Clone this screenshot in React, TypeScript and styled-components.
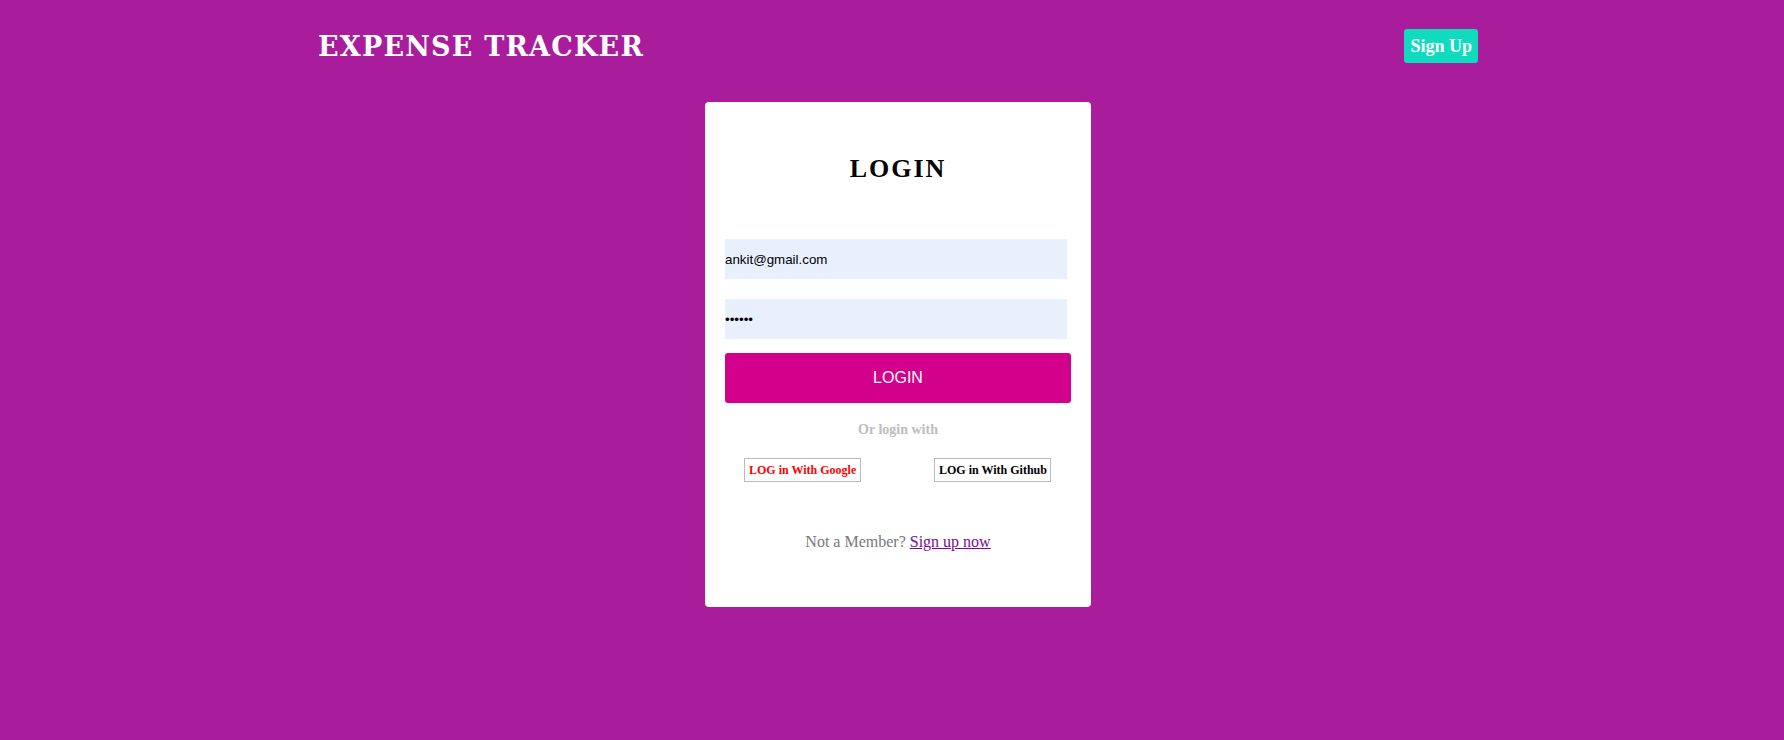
import React from 'react';
import styled, { createGlobalStyle } from 'styled-components';

const GlobalStyle = createGlobalStyle`
  html, body {
    margin: 0;
    padding: 0;
    background: #a91c9c;
  }
  * {
    box-sizing: border-box;
  }
`;

function App() {
  return (
    <Page>
      <GlobalStyle />
      <Header>
        <Brand>EXPENSE TRACKER</Brand>
        <SignUpButton>Sign Up</SignUpButton>
      </Header>
      <Main>
        <Card>
          <Title>LOGIN</Title>
          <Form onSubmit={(e) => e.preventDefault()}>
            <Field type="email" defaultValue="ankit@gmail.com" />
            <Field type="password" defaultValue="123456" />
            <SubmitButton type="submit">LOGIN</SubmitButton>
          </Form>
          <OrText>Or login with</OrText>
          <SocialRow>
            <SocialButton $color="#ff0000">LOG in With Google</SocialButton>
            <SocialButton $color="#000000">LOG in With Github</SocialButton>
          </SocialRow>
          <Footer>
            Not a Member? <SignUpLink href="#">Sign up now</SignUpLink>
          </Footer>
        </Card>
      </Main>
    </Page>
  );
}

export default App;

const Page = styled.div`
  min-height: 100vh;
  background: #a91c9c;
  font-family: 'Liberation Serif', 'Times New Roman', serif;
`;

const Header = styled.header`
  display: flex;
  align-items: center;
  justify-content: space-between;
  padding: 28px 306px 0 318px;
`;

const Brand = styled.h1`
  margin: 2px 0 0;
  color: #ffffff;
  font-family: 'DejaVu Serif', Georgia, serif;
  font-size: 27px;
  font-weight: 700;
  letter-spacing: 1.2px;
  line-height: 34px;
`;

const SignUpButton = styled.button`
  height: 34px;
  padding: 0 6px;
  border: none;
  border-radius: 3px;
  background: #0fdcbf;
  color: #ffffff;
  font-family: 'Liberation Serif', 'Times New Roman', serif;
  font-size: 18px;
  font-weight: 700;
  cursor: pointer;
`;

const Main = styled.main`
  display: flex;
  justify-content: center;
  padding: 38px 0 0 12px;
`;

const Card = styled.div`
  width: 386px;
  padding: 52px 20px 56px;
  background: #ffffff;
  border-radius: 4px;
  display: flex;
  flex-direction: column;
`;

const Title = styled.h2`
  margin: 0;
  text-align: center;
  color: #000000;
  font-size: 26px;
  font-weight: 700;
  letter-spacing: 2px;
  line-height: 30px;
`;

const Form = styled.form`
  display: flex;
  flex-direction: column;
  margin-top: 55px;
`;

const Field = styled.input`
  width: 342px;
  height: 40px;
  margin: 0 0 20px;
  padding: 0;
  border: none;
  outline: none;
  background: #e8f0fe;
  color: #000000;
  font-family: 'Liberation Sans', Arial, sans-serif;
  font-size: 13.33px;

  &:last-of-type {
    margin-bottom: 14px;
  }
`;

const SubmitButton = styled.button`
  width: 100%;
  height: 50px;
  border: none;
  border-radius: 3px;
  background: #d3008b;
  color: #ffffff;
  font-family: 'Liberation Sans', Arial, sans-serif;
  font-size: 16px;
  cursor: pointer;
`;

const OrText = styled.p`
  margin: 19px 0 0;
  text-align: center;
  color: #bdbdbd;
  font-size: 14px;
  font-weight: 700;
  line-height: 16px;
`;

const SocialRow = styled.div`
  display: flex;
  justify-content: space-between;
  margin-top: 20px;
  padding: 0 20px 0 19px;
`;

const SocialButton = styled.button<{ $color: string }>`
  width: 117px;
  height: 24px;
  padding: 0 4px;
  border: 1px solid #bbbbbb;
  background: #ffffff;
  color: ${({ $color }) => $color};
  font-family: 'Liberation Serif', 'Times New Roman', serif;
  font-size: 12px;
  font-weight: 700;
  white-space: nowrap;
  cursor: pointer;
`;

const Footer = styled.p`
  margin: 51px 0 0;
  text-align: center;
  color: #777777;
  font-size: 16px;
  line-height: 18px;
`;

const SignUpLink = styled.a`
  color: #7a0a9a;
  text-decoration: underline;
`;
